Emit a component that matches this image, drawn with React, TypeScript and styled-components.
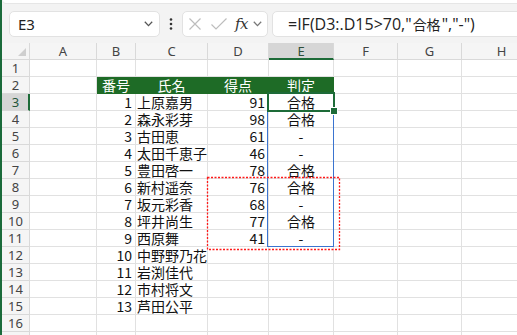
import React from "react";
import styled, { createGlobalStyle, css } from "styled-components";

const Global = createGlobalStyle`
  html, body { margin: 0; padding: 0; background: #ffffff; overflow: hidden; }
  #root { width: 517px; height: 335px; }
`;

const GRID = "#e1e1e1";
const HEAD_LINE = "#d9d9d9";
const GREEN = "#1d6b38";
const TABLE_GREEN = "#1e6b26";
const CJK = `"Noto Sans CJK JP", "Noto Sans", sans-serif`;
const UI = `"Noto Sans", "Noto Sans CJK JP", sans-serif`;

const Window = styled.div`
  width: 517px;
  height: 335px;
  box-sizing: border-box;
  border-left: 2px solid #1b6b3b;
  overflow: hidden;
  display: flex;
  flex-direction: column;
  background: #f3f3f3;
`;

const Toolbar = styled.div`
  height: 43px;
  flex: none;
  display: flex;
  flex-direction: column;
  background: #f3f3f3;
`;

const RibbonEdge = styled.div`
  height: 3px;
  margin: 0 0 0 1px;
  background: #ffffff;
  border-radius: 0 0 0 5px;
  box-shadow: 0 1px 0 #e6e6e6;
`;

const Bar = styled.div`
  display: flex;
  align-items: center;
  padding: 8px 0 0 7px;
  height: 26px;
`;

const NameBox = styled.div`
  width: 151px;
  height: 26px;
  box-sizing: border-box;
  background: #fff;
  border: 1px solid #e2e2e2;
  border-radius: 5px;
  display: flex;
  align-items: center;
  justify-content: space-between;
  padding: 0 6px 0 8px;
  font-family: ${UI};
  font-size: 15px;
  line-height: 18px;
  color: #222;
`;

const Dots = styled.div`
  width: 22px;
  display: flex;
  justify-content: center;
  align-items: center;
`;

const IconBox = styled.div`
  width: 86px;
  height: 26px;
  box-sizing: border-box;
  background: #fff;
  border: 1px solid #e2e2e2;
  border-radius: 5px;
  display: flex;
  align-items: center;
  padding: 0 0 0 5px;
`;

const Fx = styled.span`
  font-family: "DejaVu Serif", "Liberation Serif", serif;
  font-style: italic;
  font-size: 15px;
  line-height: 18px;
  color: #333;
  margin-left: 7px;
  letter-spacing: -0.5px;
`;

const FormulaBox = styled.div`
  flex: 1;
  height: 26px;
  margin-left: 4px;
  margin-right: -12px;
  box-sizing: border-box;
  background: #fff;
  border: 1px solid #e2e2e2;
  border-radius: 5px;
  display: flex;
  align-items: center;
  padding-left: 15px;
  font-family: "Open Sans", "Noto Sans CJK JP", sans-serif;
  font-size: 16px;
  line-height: 20px;
  color: #222;
  white-space: nowrap;
`;

const Kanji = styled.span`
  font-family: "Noto Sans CJK JP", sans-serif;
  font-size: 14px;
  margin: 0 1px;
`;

const SheetWrap = styled.div`
  position: relative;
  flex: 1;
  background: #fff;
`;

const Grid = styled.div`
  display: grid;
  grid-template-columns: 28px 67px 39px 72px 61px 65px 64px 64px 80px;
  grid-auto-rows: 17px;
`;

const cellBase = css`
  box-sizing: border-box;
  border-right: 1px solid ${GRID};
  border-bottom: 1px solid ${GRID};
  display: flex;
  align-items: center;
  white-space: nowrap;
  line-height: 16px;
`;

const Corner = styled.div`
  ${cellBase};
  background: #f5f5f5;
  border-color: ${HEAD_LINE};
  justify-content: flex-end;
  align-items: flex-end;
  padding: 0 3px 3px 0;
`;

const ColHead = styled.div<{ $active?: boolean }>`
  ${cellBase};
  background: ${(p) => (p.$active ? "#d6d6d6" : "#f5f5f5")};
  border-color: ${HEAD_LINE};
  justify-content: center;
  font-family: ${UI};
  font-size: 13px;
  color: ${(p) => (p.$active ? "#2f4f3a" : "#444")};
  ${(p) =>
    p.$active &&
    css`
      border-bottom: 2px solid ${GREEN};
      padding-top: 1px;
    `}
`;

const RowHead = styled.div<{ $active?: boolean }>`
  ${cellBase};
  background: ${(p) => (p.$active ? "#d6d6d6" : "#f5f5f5")};
  border-color: ${HEAD_LINE};
  justify-content: center;
  font-family: ${UI};
  font-size: 13px;
  color: ${(p) => (p.$active ? "#24553a" : "#444")};
  ${(p) =>
    p.$active &&
    css`
      border-right: 2px solid ${GREEN};
      padding-left: 1px;
    `}
`;

type Align = "left" | "right" | "center";

const Cell = styled.div<{ $align?: Align; $head?: boolean }>`
  ${cellBase};
  font-family: ${CJK};
  font-size: 14px;
  color: #111;
  padding: 0 ${(p) => (p.$align === "right" ? "3px" : "0")} 0 ${(p) => (p.$align === "left" ? "1px" : "0")};
  justify-content: ${(p) =>
    p.$align === "right" ? "flex-end" : p.$align === "center" ? "center" : "flex-start"};
  ${(p) =>
    p.$head &&
    css`
      background: ${TABLE_GREEN};
      border-color: ${TABLE_GREEN};
      color: #fff;
      justify-content: center;
      padding: 0;
    `}
`;

const Selection = styled.div`
  position: absolute;
  left: 265px;
  top: 49px;
  width: 68px;
  height: 20px;
  box-sizing: border-box;
  border: 2px solid ${GREEN};
  pointer-events: none;
`;

const FillHandle = styled.div`
  position: absolute;
  right: -4px;
  bottom: -4px;
  width: 6px;
  height: 6px;
  background: ${GREEN};
  box-shadow: 0 0 0 1px #fff;
`;

const Spill = styled.div`
  position: absolute;
  left: 265px;
  top: 50px;
  width: 67px;
  height: 154px;
  box-sizing: border-box;
  border: 1px solid #3a74d0;
  border-top: none;
  pointer-events: none;
`;

const Marquee = styled.svg`
  position: absolute;
  left: 205px;
  top: 134px;
  width: 133px;
  height: 73px;
  overflow: visible;
  pointer-events: none;
`;

const columns = ["A", "B", "C", "D", "E", "F", "G", "H"];

const data: [number, string, number | null, string | null][] = [
  [1, "上原嘉男", 91, "合格"],
  [2, "森永彩芽", 98, "合格"],
  [3, "古田恵", 61, "-"],
  [4, "太田千恵子", 46, "-"],
  [5, "豊田啓一", 78, "合格"],
  [6, "新村遥奈", 76, "合格"],
  [7, "坂元彩香", 68, "-"],
  [8, "坪井尚生", 77, "合格"],
  [9, "西原舞", 41, "-"],
  [10, "中野野乃花", null, null],
  [11, "岩渕佳代", null, null],
  [12, "市村将文", null, null],
  [13, "芦田公平", null, null],
];

const XIcon = () => (
  <svg width="14" height="14" viewBox="0 0 14 14">
    <path d="M1.5 1.5 L12.5 12.5 M12.5 1.5 L1.5 12.5" stroke="#bdbdbd" strokeWidth="1.2" fill="none" />
  </svg>
);

const CheckIcon = () => (
  <svg width="18" height="14" viewBox="0 0 18 14" style={{ marginLeft: 8 }}>
    <path d="M1.5 7.5 L6 12 L16.5 1.5" stroke="#bdbdbd" strokeWidth="1.2" fill="none" />
  </svg>
);

const Chevron = ({ color = "#444", w = 9 }: { color?: string; w?: number }) => (
  <svg width={w} height="6" viewBox="0 0 9 6">
    <path d="M0.8 0.8 L4.5 4.6 L8.2 0.8" stroke={color} strokeWidth="1.3" fill="none" />
  </svg>
);

const VDots = () => (
  <svg width="4" height="12" viewBox="0 0 4 12">
    <circle cx="2" cy="1.5" r="1.3" fill="#333" />
    <circle cx="2" cy="6" r="1.3" fill="#333" />
    <circle cx="2" cy="10.5" r="1.3" fill="#333" />
  </svg>
);

const CornerTri = () => (
  <svg width="8" height="8" viewBox="0 0 8 8">
    <path d="M8 0 L8 8 L0 8 Z" fill="#cfcfcf" />
  </svg>
);

export default function App() {
  const rows: React.ReactNode[] = [];
  for (let r = 1; r <= 17; r++) {
    rows.push(
      <RowHead key={`rh${r}`} $active={r === 3}>
        {r}
      </RowHead>
    );
    for (let c = 0; c < 8; c++) {
      const key = `c${r}-${c}`;
      if (r === 2 && c >= 1 && c <= 4) {
        const label = ["番号", "氏名", "得点", "判定"][c - 1];
        rows.push(
          <Cell key={key} $head>
            {label}
          </Cell>
        );
        continue;
      }
      const d = r >= 3 && r <= 15 ? data[r - 3] : null;
      if (d && c === 1) {
        rows.push(<Cell key={key} $align="right">{d[0]}</Cell>);
      } else if (d && c === 2) {
        rows.push(<Cell key={key} $align="left">{d[1]}</Cell>);
      } else if (d && c === 3) {
        rows.push(<Cell key={key} $align="right">{d[2] ?? ""}</Cell>);
      } else if (d && c === 4) {
        rows.push(<Cell key={key} $align="center">{d[3] ?? ""}</Cell>);
      } else {
        rows.push(<Cell key={key} />);
      }
    }
  }

  return (
    <>
      <Global />
      <Window>
        <Toolbar>
          <RibbonEdge />
          <Bar>
            <NameBox>
              <span>E3</span>
              <Chevron color="#555" />
            </NameBox>
            <Dots>
              <VDots />
            </Dots>
            <IconBox>
              <XIcon />
              <CheckIcon />
              <Fx>fx</Fx>
              <span style={{ marginLeft: 5, display: "flex" }}>
                <Chevron color="#777" w={9} />
              </span>
            </IconBox>
            <FormulaBox>
              =IF(D3:.D15&gt;70,"<Kanji>合格</Kanji>","-")
            </FormulaBox>
          </Bar>
        </Toolbar>
        <SheetWrap>
          <Grid>
            <Corner>
              <CornerTri />
            </Corner>
            {columns.map((c) => (
              <ColHead key={c} $active={c === "E"}>
                {c}
              </ColHead>
            ))}
            {rows}
          </Grid>
          <Spill />
          <Marquee viewBox="0 0 133 73">
            <rect
              x="0.5"
              y="0.5"
              width="132"
              height="72"
              fill="none"
              stroke="#ff1a1a"
              strokeWidth="1.3"
              strokeDasharray="2 1.5"
            />
          </Marquee>
          <Selection>
            <FillHandle />
          </Selection>
        </SheetWrap>
      </Window>
    </>
  );
}
